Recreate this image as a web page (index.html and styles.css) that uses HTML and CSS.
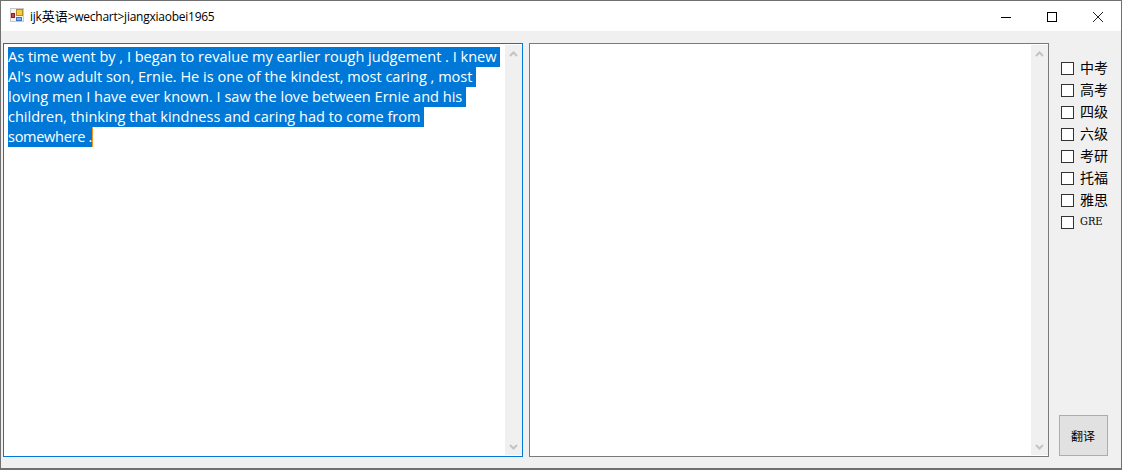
FILE: index.html
```html
<!DOCTYPE html>
<html lang="zh">
<head>
<meta charset="utf-8">
<title>ijk英语>wechart>jiangxiaobei1965</title>
<link rel="stylesheet" href="styles.css">
</head>
<body>
<div class="window">
  <header class="titlebar">
    <svg class="app-icon" width="14" height="14" viewBox="0 0 14 14">
      <rect x="0" y="0" width="14" height="14" fill="#c8c8c8"/>
      <rect x="1" y="1" width="12" height="12" fill="#f4f4f4"/>
      <rect x="6" y="1" width="7" height="7" fill="#b98a1e"/>
      <rect x="7" y="2" width="5" height="5" fill="#f6c93f"/>
      <rect x="1" y="5" width="4" height="5" fill="#8c1f1f"/>
      <rect x="2" y="6" width="2" height="3" fill="#dd3a30"/>
      <rect x="6" y="9" width="6" height="4" fill="#3f74c4"/>
      <rect x="7" y="10" width="4" height="2" fill="#86b2ea"/>
    </svg>
    <div class="title">ijk<span class="title-cjk">英语</span>&gt;wechart&gt;jiangxiaobei1965</div>
    <div class="win-btn">
      <svg width="10" height="10" viewBox="0 0 10 10"><path d="M0 5.500H10" stroke="#000" fill="none"/></svg>
    </div>
    <div class="win-btn">
      <svg width="10" height="10" viewBox="0 0 10 10"><rect x=".5" y=".5" width="9" height="9" stroke="#000" fill="none"/></svg>
    </div>
    <div class="win-btn">
      <svg width="10" height="10" viewBox="0 0 10 10"><path d="M0 0L10 10M10 0L0 10" stroke="#222" fill="none"/></svg>
    </div>
  </header>
  <main class="content">
    <section class="textbox focused">
      <div class="text">
        <div class="line"><span class="sel">As time went by , I began to revalue my earlier rough judgement . I knew&nbsp;</span></div>
        <div class="line"><span class="sel">Al's now adult son, Ernie. He is one of the kindest, most caring , most&nbsp;</span></div>
        <div class="line"><span class="sel">loving men I have ever known. I saw the love between Ernie and his&nbsp;</span></div>
        <div class="line"><span class="sel">children, thinking that kindness and caring had to come from&nbsp;</span></div>
        <div class="line"><span class="sel caret">somewhere .</span></div>
      </div>
      <div class="scrollbar">
        <svg width="9" height="6" viewBox="0 0 9 6"><path d="M1 5L4.500 1.500L8 5" stroke="#c4c4c4" stroke-width="2" fill="none"/></svg>
        <svg width="9" height="6" viewBox="0 0 9 6"><path d="M1 1L4.500 4.500L8 1" stroke="#c4c4c4" stroke-width="2" fill="none"/></svg>
      </div>
    </section>
    <section class="textbox">
      <div class="text"></div>
      <div class="scrollbar">
        <svg width="9" height="6" viewBox="0 0 9 6"><path d="M1 5L4.500 1.500L8 5" stroke="#c4c4c4" stroke-width="2" fill="none"/></svg>
        <svg width="9" height="6" viewBox="0 0 9 6"><path d="M1 1L4.500 4.500L8 1" stroke="#c4c4c4" stroke-width="2" fill="none"/></svg>
      </div>
    </section>
    <aside class="side">
      <ul class="checks">
        <li class="check"><span class="box"></span><span class="label">中考</span></li>
        <li class="check"><span class="box"></span><span class="label">高考</span></li>
        <li class="check"><span class="box"></span><span class="label">四级</span></li>
        <li class="check"><span class="box"></span><span class="label">六级</span></li>
        <li class="check"><span class="box"></span><span class="label">考研</span></li>
        <li class="check"><span class="box"></span><span class="label">托福</span></li>
        <li class="check"><span class="box"></span><span class="label">雅思</span></li>
        <li class="check"><span class="box"></span><span class="label latin">GRE</span></li>
      </ul>
      <button class="translate">翻译</button>
    </aside>
  </main>
</div>
</body>
</html>
```
FILE: styles.css
```css
* { box-sizing: border-box; }
html, body { margin: 0; padding: 0; }
body { width: 1122px; height: 470px; overflow: hidden; font-family: "Noto Sans CJK SC", sans-serif; }
.window {
  width: 1122px; height: 470px;
  border: 1px solid #707070;
  border-bottom-width: 2px;
  background: #f0f0f0;
  display: flex; flex-direction: column;
}
.titlebar {
  height: 30px; flex: none;
  background: #fff;
  display: flex; align-items: flex-start;
  padding: 7px 0 0 9px;
}
.app-icon { flex: none; }
.title {
  flex: 1;
  margin-left: 6px;
  font: 12px/16px "Open Sans", "Noto Sans CJK SC", sans-serif;
  letter-spacing: -0.25px;
  color: #000;
}
.title-cjk { font-size: 13px; letter-spacing: 0; }
.win-btn {
  width: 46px; height: 16px;
  display: flex; align-items: center; justify-content: center;
  flex: none;
  padding-top: 2px;
}
.content {
  flex: 1; min-height: 0;
  display: flex;
  padding: 12px 13px 11px 2px;
  gap: 6px;
}
.textbox {
  width: 520px; flex: none;
  border: 1px solid #7a7a7a;
  background: #fff;
  display: flex;
}
.textbox.focused { border-color: #0078d7; }
.text { flex: 1; padding: 3px 0 0 4px; min-width: 0; }
.line { height: 20px; white-space: pre; display: flex; }
.sel {
  display: block; height: 20px;
  background: #0078d7; color: #fff;
  font: 14.54px/18px "Open Sans", sans-serif;
}
.caret { letter-spacing: -0.3px; border-right: 1px solid #f7931e; }
.scrollbar {
  width: 17px; flex: none;
  margin: 1px 0;
  background: #f0f0f0;
  display: flex; flex-direction: column; justify-content: space-between; align-items: center;
  padding: 6px 0 5px;
}
.side {
  flex: 1;
  display: flex; flex-direction: column; justify-content: space-between;
  padding-left: 4px;
}
.checks {
  list-style: none; margin: 14px 0 0 0; padding: 0 0 0 2px;
}
.check {
  height: 22px;
  display: flex; align-items: center;
  gap: 6px;
}
.label {
  font: 14px/20px "Noto Sans CJK SC", sans-serif;
  color: #000;
  margin-top: -2px;
}
.latin { font: 11px/20px "DejaVu Serif Condensed", "DejaVu Serif", serif; margin-top: 0; }
.box { width: 13px; height: 13px; border: 1px solid #333; background: #fff; flex: none; }
.translate {
  width: 49px; height: 41px;
  margin-bottom: 1px;
  border: 1px solid #adadad;
  background: #e1e1e1;
  font: 12px "Noto Sans CJK SC", sans-serif;
  color: #000;
  padding: 0 1px 0 0;
}
```
